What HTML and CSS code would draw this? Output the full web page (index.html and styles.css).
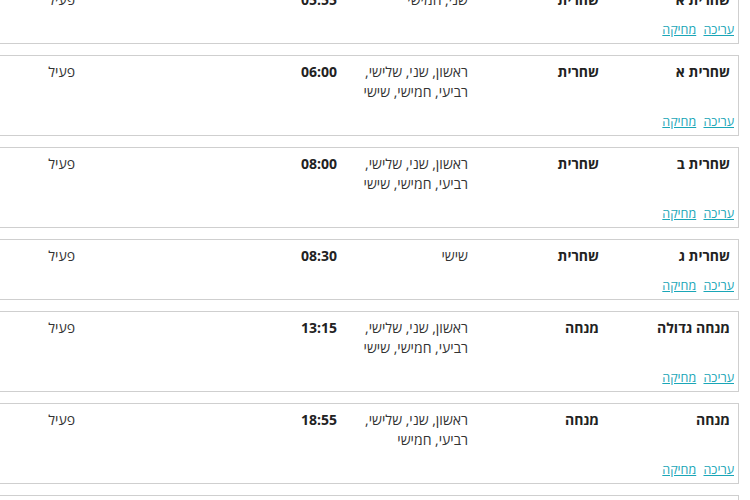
FILE: index.html
```html
<!DOCTYPE html>
<html lang="he" dir="rtl">
<head>
<meta charset="utf-8">
<link rel="stylesheet" href="styles.css">
</head>
<body>
<div class="list">
  <div class="card">
    <div class="row">
      <div class="cell name">שחרית א</div>
      <div class="cell type">שחרית</div>
      <div class="cell days">שני, חמישי</div>
      <div class="cell time">05:55</div>
      <div class="cell"></div>
      <div class="cell status">פעיל</div>
    </div>
    <div class="actions"><a href="#">עריכה</a> <a href="#">מחיקה</a></div>
  </div>
  <div class="card">
    <div class="row">
      <div class="cell name">שחרית א</div>
      <div class="cell type">שחרית</div>
      <div class="cell days">ראשון, שני, שלישי, רביעי, חמישי, שישי</div>
      <div class="cell time">06:00</div>
      <div class="cell"></div>
      <div class="cell status">פעיל</div>
    </div>
    <div class="actions"><a href="#">עריכה</a> <a href="#">מחיקה</a></div>
  </div>
  <div class="card">
    <div class="row">
      <div class="cell name">שחרית ב</div>
      <div class="cell type">שחרית</div>
      <div class="cell days">ראשון, שני, שלישי, רביעי, חמישי, שישי</div>
      <div class="cell time">08:00</div>
      <div class="cell"></div>
      <div class="cell status">פעיל</div>
    </div>
    <div class="actions"><a href="#">עריכה</a> <a href="#">מחיקה</a></div>
  </div>
  <div class="card">
    <div class="row">
      <div class="cell name">שחרית ג</div>
      <div class="cell type">שחרית</div>
      <div class="cell days">שישי</div>
      <div class="cell time">08:30</div>
      <div class="cell"></div>
      <div class="cell status">פעיל</div>
    </div>
    <div class="actions"><a href="#">עריכה</a> <a href="#">מחיקה</a></div>
  </div>
  <div class="card">
    <div class="row">
      <div class="cell name">מנחה גדולה</div>
      <div class="cell type">מנחה</div>
      <div class="cell days">ראשון, שני, שלישי, רביעי, חמישי, שישי</div>
      <div class="cell time">13:15</div>
      <div class="cell"></div>
      <div class="cell status">פעיל</div>
    </div>
    <div class="actions"><a href="#">עריכה</a> <a href="#">מחיקה</a></div>
  </div>
  <div class="card">
    <div class="row">
      <div class="cell name">מנחה</div>
      <div class="cell type">מנחה</div>
      <div class="cell days">ראשון, שני, שלישי, רביעי, חמישי</div>
      <div class="cell time">18:55</div>
      <div class="cell"></div>
      <div class="cell status">פעיל</div>
    </div>
    <div class="actions"><a href="#">עריכה</a> <a href="#">מחיקה</a></div>
  </div>
  <div class="card">
    <div class="row">
      <div class="cell name">ערבית</div>
      <div class="cell type">ערבית</div>
      <div class="cell days">ראשון, שני, שלישי, רביעי, חמישי</div>
      <div class="cell time">20:00</div>
      <div class="cell"></div>
      <div class="cell status">פעיל</div>
    </div>
    <div class="actions"><a href="#">עריכה</a> <a href="#">מחיקה</a></div>
  </div>
</div>
</body>
</html>
```
FILE: styles.css
```css
html, body {
  margin: 0;
  padding: 0;
  background: #fff;
}
body {
  font-family: "Open Sans", "Liberation Sans", "DejaVu Sans", sans-serif;
  font-size: 14px;
  color: #333;
  overflow: hidden;
}
.list {
  margin-top: -17px;
  margin-right: 11px;
  display: flex;
  flex-direction: column;
  gap: 11px;
  overflow: hidden;
}
.card {
  width: 788px;
  flex: none;
  border: 1px solid #cfcfcf;
  box-sizing: border-box;
  background: #fff;
}
.row {
  display: grid;
  grid-template-columns: repeat(6, 131px);
  padding-top: 6px;
  line-height: 20px;
}
.cell {
  padding: 0 8px;
  text-align: right;
}
.name, .type, .time {
  font-weight: bold;
  color: #222;
}
.actions {
  padding: 12px 4px 5px 0;
  font-size: 12.5px;
  line-height: 16px;
}
.actions a {
  color: #1aa6b7;
  text-decoration: underline;
  margin-left: 4px;
}
```
